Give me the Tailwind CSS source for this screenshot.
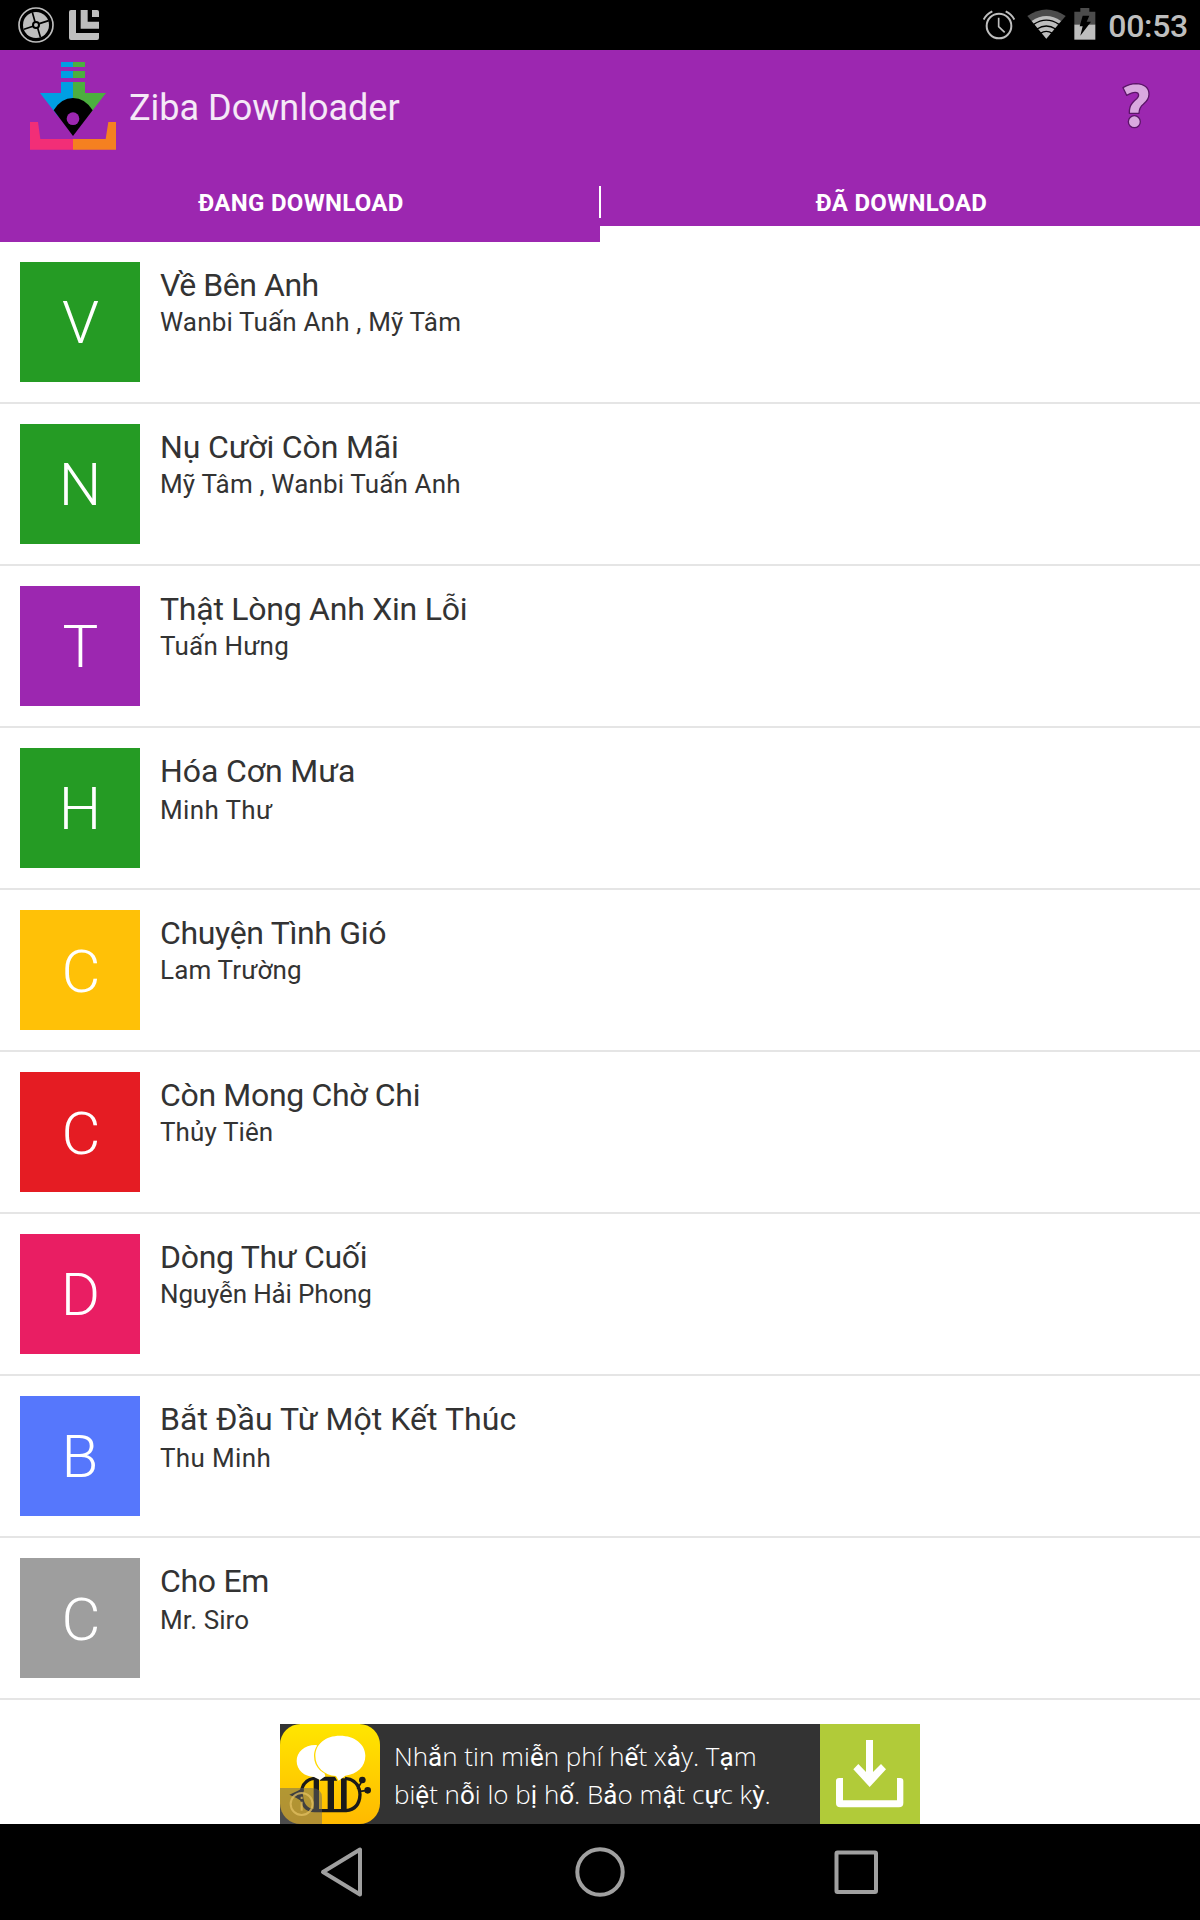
<!doctype html>
<html lang="vi">
<head>
  <meta charset="UTF-8">
  <meta name="viewport" content="width=device-width, initial-scale=1.0">
  <title>Ziba Downloader</title>
  <script src="https://cdn.jsdelivr.net/npm/@tailwindcss/browser@4"></script>
</head>
<body class="bg-white font-[Roboto,sans-serif]">
  <div class="w-[1200px] h-[1920px] flex flex-col overflow-hidden">

    <!-- Status bar -->
    <div class="h-[50px] bg-black flex items-center pl-[18px] pr-3 text-[#bebebe]">
      <svg class="w-9 h-9" viewBox="54 21 108 108">
        <circle cx="108" cy="75" r="51" fill="none" stroke="#bebebe" stroke-width="5"/>
        <circle cx="108" cy="75" r="39" fill="#bebebe"/>
        <path d="M105 65L97 37M118 71L146 62M113 84L121 111M99 79L72 88" stroke="#000" stroke-width="5"/>
        <circle cx="108" cy="75" r="9" fill="#bebebe" stroke="#000" stroke-width="6"/>
      </svg>
      <svg class="w-[30px] h-[30px] ml-[15px]" viewBox="207 30 90 90" fill="#bebebe">
        <path d="M213 30H228V99H297V114Q297 120 291 120H213Q207 120 207 114V36Q207 30 213 30Z"/>
        <path d="M242 30H263V65H297V86H242Z"/>
        <path d="M276 30H291Q297 30 297 36V51H276Z"/>
      </svg>
      <div class="grow"></div>
      <svg class="w-8 h-[30px]" viewBox="69 31 96 90" fill="none" stroke="#bebebe">
        <circle cx="117" cy="79" r="37" stroke-width="6"/>
        <path d="M116 54V81L134 98" stroke-width="5"/>
        <path d="M71 60Q79 43 97 35M137 35Q155 43 163 60" stroke-width="6"/>
      </svg>
      <svg class="w-[39px] h-[30px] ml-3 -mt-0.5" viewBox="202 28 117 90">
        <path d="M260 117L203 49Q260 10 318 49Z" fill="#4c4c4c"/>
        <path d="M260 117L216 64Q260 34 304 64Z" fill="#bebebe"/>
        <path d="M222 74Q260 49 298 74M232 88Q260 70 288 88M242 101Q260 89 278 101" fill="none" stroke="#000" stroke-width="4"/>
      </svg>
      <svg class="w-[22px] h-8 ml-2 -mt-0.5" viewBox="344 25 66 96">
        <path d="M345 36H363V25H390V36H408V76H345Z" fill="#4c4c4c"/>
        <path d="M345 75H408V120H345Z" fill="#bebebe"/>
        <path d="M370 48H390L382 66H395L363 108L370 80H361Z" fill="#000"/>
      </svg>
      <span class="ml-3 mt-0.5 text-[32px] leading-[50px] font-medium tracking-[-0.3px]">00:53</span>
    </div>

    <!-- Header -->
    <div class="h-[192px] bg-[#9c27b0] flex flex-col text-white">
      <div class="h-[114px] flex items-center pl-[30px] pr-[50px]">
        <svg class="w-[86px] h-[88px] -mt-0.5" viewBox="90 36 258 264">
          <path d="M183 36H219V51H183ZM183 63H219V84H183ZM183 96H219V200H175L120 129H183Z" fill="#009fe3"/>
          <path d="M219 36H255V51H219ZM219 63H255V84H219ZM219 96H255V129H318L263 200H219Z" fill="#4caf3f"/>
          <path d="M161 181Q183 144 219 144T278 181L219 258Z" fill="#000"/>
          <circle cx="219" cy="206" r="19" fill="#9c27b0"/>
          <path d="M90 216H114L121 267H219V299H90Z" fill="#f22e77"/>
          <path d="M348 216H325L317 267H219V299H348Z" fill="#f58020"/>
        </svg>
        <h1 class="ml-[13px] mt-0.5 text-[36px] leading-[42px] text-white/90">Ziba Downloader</h1>
        <div class="grow"></div>
        <svg class="w-7 h-12 -mt-0.5" viewBox="127 67 84 144" fill="#d9a9df" stroke="#5b1468" stroke-width="4" stroke-linejoin="round">
          <path d="M130 84Q150 72 169 72Q208 74 208 104Q208 120 191 134Q179 143 178 161H149Q148 142 158 130Q163 123 171 117Q180 108 175 101Q166 93 141 107Z"/>
          <circle cx="164" cy="186" r="18"/>
        </svg>
      </div>
      <div class="h-[78px] flex text-[24px] leading-[28px] font-bold text-center tracking-[0.3px]">
        <div class="w-[599px] pt-[25px] pl-[3px]">ĐANG DOWNLOAD</div>
        <div class="w-0.5 h-8 mt-[22px] bg-white"></div>
        <div class="w-[599px] pt-[25px] pl-0.5 relative">ĐÃ DOWNLOAD
          <div class="absolute -left-px right-0 bottom-0 h-4 bg-white"></div>
        </div>
      </div>
    </div>

    <!-- Songs -->
    <ul class="text-[#333]">
      <li class="h-[162px] flex gap-5 px-5 pt-5 border-b-2 border-[#e5e5e5]">
        <div class="w-[120px] h-[120px] pl-px bg-[#259b24] text-white text-[60px] leading-[122px] font-light text-center">V</div>
        <div class="pt-1">
          <h2 class="text-[32px] leading-[38px] tracking-[-0.45px]">Về Bên Anh</h2>
          <p class="mt-0.5 text-[26px] leading-8 tracking-[0.17px]">Wanbi Tuấn Anh , Mỹ Tâm</p>
        </div>
      </li>
      <li class="h-[162px] flex gap-5 px-5 pt-5 border-b-2 border-[#e5e5e5]">
        <div class="w-[120px] h-[120px] bg-[#259b24] text-white text-[60px] leading-[122px] font-light text-center">N</div>
        <div class="pt-1">
          <h2 class="text-[32px] leading-[38px] tracking-[-0.15px]">Nụ Cười Còn Mãi</h2>
          <p class="mt-0.5 text-[26px] leading-8 tracking-[0.15px]">Mỹ Tâm , Wanbi Tuấn Anh</p>
        </div>
      </li>
      <li class="h-[162px] flex gap-5 px-5 pt-5 border-b-2 border-[#e5e5e5]">
        <div class="w-[120px] h-[120px] pl-px bg-[#9c27b0] text-white text-[60px] leading-[122px] font-light text-center">T</div>
        <div class="pt-1">
          <h2 class="text-[32px] leading-[38px] tracking-[-0.25px]">Thật Lòng Anh Xin Lỗi</h2>
          <p class="mt-0.5 text-[26px] leading-8 tracking-[0.2px]">Tuấn Hưng</p>
        </div>
      </li>
      <li class="h-[162px] flex gap-5 px-5 pt-5 border-b-2 border-[#e5e5e5]">
        <div class="w-[120px] h-[120px] bg-[#259b24] text-white text-[60px] leading-[122px] font-light text-center">H</div>
        <div class="pt-1">
          <h2 class="text-[32px] leading-[38px] tracking-[-0.1px]">Hóa Cơn Mưa</h2>
          <p class="mt-1 text-[26px] leading-8 tracking-[0.35px]">Minh Thư</p>
        </div>
      </li>
      <li class="h-[162px] flex gap-5 px-5 pt-5 border-b-2 border-[#e5e5e5]">
        <div class="w-[120px] h-[120px] pl-0.5 bg-[#ffc107] text-white text-[60px] leading-[124px] font-light text-center">C</div>
        <div class="pt-1">
          <h2 class="text-[32px] leading-[38px] tracking-[-0.33px]">Chuyện Tình Gió</h2>
          <p class="mt-0.5 text-[26px] leading-8 tracking-[0.15px]">Lam Trường</p>
        </div>
      </li>
      <li class="h-[162px] flex gap-5 px-5 pt-5 border-b-2 border-[#e5e5e5]">
        <div class="w-[120px] h-[120px] pl-0.5 bg-[#e51c23] text-white text-[60px] leading-[124px] font-light text-center">C</div>
        <div class="pt-1">
          <h2 class="text-[32px] leading-[38px] tracking-[-0.33px]">Còn Mong Chờ Chi</h2>
          <p class="mt-0.5 text-[26px] leading-8 tracking-[0.1px]">Thủy Tiên</p>
        </div>
      </li>
      <li class="h-[162px] flex gap-5 px-5 pt-5 border-b-2 border-[#e5e5e5]">
        <div class="w-[120px] h-[120px] pl-px bg-[#e91e63] text-white text-[60px] leading-[122px] font-light text-center">D</div>
        <div class="pt-1">
          <h2 class="text-[32px] leading-[38px] tracking-[-0.3px]">Dòng Thư Cuối</h2>
          <p class="mt-0.5 text-[26px] leading-8 tracking-[-0.15px]">Nguyễn Hải Phong</p>
        </div>
      </li>
      <li class="h-[162px] flex gap-5 px-5 pt-5 border-b-2 border-[#e5e5e5]">
        <div class="w-[120px] h-[120px] bg-[#5677fc] text-white text-[60px] leading-[122px] font-light text-center">B</div>
        <div class="pt-1">
          <h2 class="text-[32px] leading-[38px] tracking-[0.05px]">Bắt Đầu Từ Một Kết Thúc</h2>
          <p class="mt-1 text-[26px] leading-8 tracking-[0.35px]">Thu Minh</p>
        </div>
      </li>
      <li class="h-[162px] flex gap-5 px-5 pt-5 border-b-2 border-[#e5e5e5]">
        <div class="w-[120px] h-[120px] pl-0.5 bg-[#9e9e9e] text-white text-[60px] leading-[124px] font-light text-center">C</div>
        <div class="pt-1">
          <h2 class="text-[32px] leading-[38px] tracking-[-0.3px]">Cho Em</h2>
          <p class="mt-1 text-[26px] leading-8 tracking-[0.1px]">Mr. Siro</p>
        </div>
      </li>
    </ul>

    <!-- Ad banner -->
    <div class="mt-6 mx-auto w-[640px] h-[100px] bg-[#333] flex">
      <svg class="w-[100px] h-[100px]" viewBox="30 27 300 300">
        <defs>
          <linearGradient id="bee" x1="0" y1="0" x2="0" y2="1">
            <stop offset="0" stop-color="#ffe600"/>
            <stop offset="1" stop-color="#ffb900"/>
          </linearGradient>
        </defs>
        <rect x="30" y="27" width="300" height="300" rx="62" fill="url(#bee)"/>
        <g fill="none" stroke="#1a1a1a" stroke-width="10">
          <path d="M146 190H132Q94 196 94 239Q96 286 134 287H228Q268 283 270 239Q268 194 225 190"/>
          <path d="M262 222L277 197M270 229L292 226" stroke-width="5"/>
        </g>
        <path d="M131 190H147V288H131ZM150 185H201V197H192V288H173V197H150ZM213 190H230V288H213ZM58 239L82 228Q97 218 102 224L94 258Q76 246 58 239Z" fill="#1a1a1a"/>
        <circle cx="277" cy="195" r="10" fill="#1a1a1a"/>
        <circle cx="293" cy="226" r="10" fill="#1a1a1a"/>
        <path d="M140 90C105 88 80 110 80 138C80 165 103 185 132 186L150 195L166 184Z" fill="#fff"/>
        <path d="M210 62C166 62 136 88 136 122C136 157 163 180 198 183L206 197L226 182C262 177 286 155 286 122C286 88 254 62 210 62Z" fill="#ffd900" transform="translate(-4 1)"/>
        <path d="M210 62C166 62 136 88 136 122C136 157 163 180 198 183L206 197L226 182C262 177 286 155 286 122C286 88 254 62 210 62Z" fill="#fff"/>
        <path d="M30 219H126Q156 219 156 249V327H30Z" fill="#666" fill-opacity=".5"/>
        <g fill="none" stroke="#e3c062" stroke-width="6" opacity=".75">
          <circle cx="95" cy="267" r="33"/>
          <path d="M95 260V287M95 245V252"/>
        </g>
      </svg>
      <div class="w-[440px] pl-[14px] pt-[13px] text-[26px] leading-[38px] font-light text-white font-['Open_Sans',sans-serif] whitespace-nowrap">
        <p>Nh<span class="font-[Roboto] font-normal leading-none">ắ</span>n tin mi<span class="font-[Roboto] font-normal leading-none">ễ</span>n phí h<span class="font-[Roboto] font-normal leading-none">ế</span>t x<span class="font-[Roboto] font-normal leading-none">ả</span>y. T<span class="font-[Roboto] font-normal leading-none">ạ</span>m</p>
        <p>bi<span class="font-[Roboto] font-normal leading-none">ệ</span>t n<span class="font-[Roboto] font-normal leading-none">ỗ</span>i lo b<span class="font-[Roboto] font-normal leading-none">ị</span> h<span class="font-[Roboto] font-normal leading-none">ố</span>. B<span class="font-[Roboto] font-normal leading-none">ả</span>o m<span class="font-[Roboto] font-normal leading-none">ậ</span>t c<span class="font-[Roboto] font-normal leading-none">ự</span>c k<span class="font-[Roboto] font-normal leading-none">ỳ</span>.</p>
      </div>
      <svg class="w-[100px] h-[100px] bg-[#b1cb39]" viewBox="840 27 300 300">
        <path d="M978 75H999V171L1023 147L1038 163L989 216L940 163L955 147L978 171Z" fill="#fff"/>
        <path d="M888 198Q888 189 897 189H909V256H1071V189H1081Q1090 189 1090 198V264Q1090 277 1077 277H901Q888 277 888 264Z" fill="#fff"/>
      </svg>
    </div>

    <!-- Navigation bar -->
    <div class="h-24 bg-black flex justify-center items-center">
      <svg class="w-[600px] h-24" viewBox="300 1824 600 96" fill="none" stroke="#a0a0a0" stroke-width="4" stroke-linejoin="round">
        <path d="M323 1872L360 1849.500V1894.500Z"/>
        <circle cx="600" cy="1872" r="22.700"/>
        <rect x="836.500" y="1852.500" width="39.500" height="39.500" rx="1"/>
      </svg>
    </div>
  </div>
</body>
</html>
